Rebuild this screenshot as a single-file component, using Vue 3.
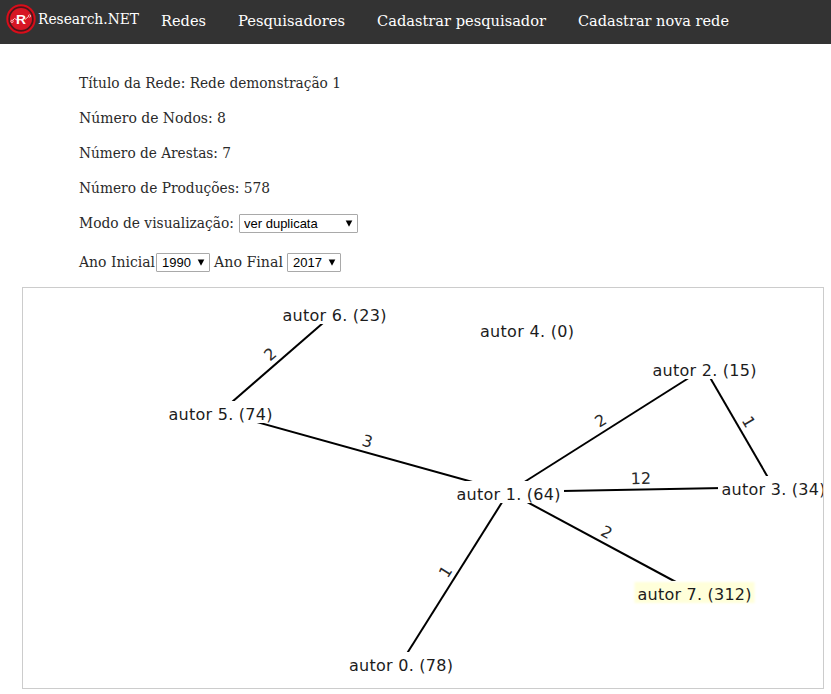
<script setup>
import { ref } from 'vue'

const links = [
  { label: 'Redes', width: 45 },
  { label: 'Pesquisadores', width: 107 },
  { label: 'Cadastrar pesquisador', width: 169 },
  { label: 'Cadastrar nova rede', width: 151 },
]

const facts = [
  { text: 'Título da Rede: Rede demonstração 1', width: 262 },
  { text: 'Número de Nodos: 8', width: 147 },
  { text: 'Número de Arestas: 7', width: 152 },
  { text: 'Número de Produções: 578', width: 191 },
]

const mode = ref('ver duplicata')
const firstYear = ref('1990')
const lastYear = ref('2017')

// Centre of each author box and the length of its label
const nodes = [
  { id: 0, count: 78, x: 401, y: 663, w: 104 },
  { id: 1, count: 64, x: 508.5, y: 492, w: 104 },
  { id: 2, count: 15, x: 704.5, y: 368, w: 104 },
  { id: 3, count: 34, x: 773.5, y: 487, w: 104 },
  { id: 4, count: 0, x: 527, y: 329, w: 94 },
  { id: 5, count: 74, x: 220.5, y: 412, w: 104 },
  { id: 6, count: 23, x: 334.5, y: 313, w: 104 },
  { id: 7, count: 312, x: 694.5, y: 592, w: 114, active: true },
]

const edges = [
  [5, 6, 2],
  [5, 1, 3],
  [1, 2, 2],
  [2, 3, 1],
  [1, 3, 12],
  [0, 1, 1],
  [1, 7, 2],
].map(([from, to, label]) => {
  const a = nodes[from]
  const b = nodes[to]
  const angle = (Math.atan2(b.y - a.y, b.x - a.x) * 180) / Math.PI
  return { a, b, label, place: `translate(${(a.x + b.x) / 2} ${(a.y + b.y) / 2}) rotate(${angle})` }
})
</script>

<template>
  <header class="bar">
    <div class="brand">
      <svg class="logo" width="30" height="30" viewBox="0 0 30 30">
        <circle cx="15" cy="15" r="13.7" fill="#4a171b" stroke="#d90d1a" stroke-width="2" />
        <circle cx="15" cy="15" r="11" fill="#d71624" />
        <path d="M6.500 16.500L8.500 14.500L11 16M19 15.500L22.500 12.500" fill="none" stroke="#ffc9cb" stroke-width="1" />
        <circle cx="6" cy="17.300" r="1.200" fill="#d71624" stroke="#ffd5d6" stroke-width=".8" />
        <circle cx="23.500" cy="12" r="1.200" fill="#d71624" stroke="#ffd5d6" stroke-width=".8" />
        <text x="10" y="19.500" textLength="10" lengthAdjust="spacingAndGlyphs" class="mark">R</text>
      </svg>
      <svg class="line" width="102" height="24"><text y="17" textLength="101" lengthAdjust="spacingAndGlyphs" class="serif name">Research.NET</text></svg>
    </div>
    <nav class="links">
      <svg v-for="l in links" :key="l.label" class="line" :width="l.width + 1" height="24">
        <text y="17" :textLength="l.width" lengthAdjust="spacingAndGlyphs" class="serif link">{{ l.label }}</text>
      </svg>
    </nav>
  </header>

  <main>
    <section class="info">
      <svg v-for="f in facts" :key="f.text" class="line fact" :width="f.width" height="24">
        <text y="16" :textLength="f.width" lengthAdjust="spacingAndGlyphs" class="serif">{{ f.text }}</text>
      </svg>
      <div class="row mode">
        <svg class="line" width="155" height="24"><text y="16" textLength="155" lengthAdjust="spacingAndGlyphs" class="serif">Modo de visualização:</text></svg>
        <label class="pick wide">
          <select v-model="mode"><option>ver duplicata</option></select>
          <svg width="8" height="7" viewBox="0 0 8 7"><path d="M.7.5h6.600L4 6.800z" /></svg>
        </label>
      </div>
      <div class="row years">
        <svg class="line" width="77" height="24"><text y="16" textLength="76" lengthAdjust="spacingAndGlyphs" class="serif">Ano Inicial</text></svg>
        <label class="pick year">
          <select v-model="firstYear"><option>1990</option></select>
          <svg width="8" height="7" viewBox="0 0 8 7"><path d="M.7.5h6.600L4 6.800z" /></svg>
        </label>
        <svg class="line final" width="69" height="24"><text y="16" textLength="69" lengthAdjust="spacingAndGlyphs" class="serif">Ano Final</text></svg>
        <label class="pick year">
          <select v-model="lastYear"><option>2017</option></select>
          <svg width="8" height="7" viewBox="0 0 8 7"><path d="M.7.5h6.600L4 6.800z" /></svg>
        </label>
      </div>
    </section>

    <svg class="graph" width="802" height="402" viewBox="22 287 802 402">
      <defs>
        <clipPath id="inside"><rect x="23" y="288" width="800" height="400" /></clipPath>
        <filter id="soft"><feGaussianBlur stdDeviation="1" /></filter>
      </defs>
      <g clip-path="url(#inside)">
        <line v-for="(e, i) in edges" :key="i" :x1="e.a.x" :y1="e.a.y" :x2="e.b.x" :y2="e.b.y" class="edge" />
        <text v-for="(e, i) in edges" :key="'t' + i" :transform="e.place" y="-5.500" class="weight">{{ e.label }}</text>
        <g v-for="n in nodes" :key="n.id">
          <rect :x="n.x - n.w / 2 - 3.500" :y="n.y - 11" :width="n.w + 7" height="22" fill="#fff" />
          <rect v-if="n.active" :x="n.x - n.w / 2 - 3" :y="n.y - 10" :width="n.w + 6" height="21" fill="#ffffda" filter="url(#soft)" />
          <text :x="n.x - n.w / 2" :y="n.y + 8" :textLength="n.w" class="author">autor {{ n.id }}. ({{ n.count }})</text>
        </g>
      </g>
      <rect x="22.500" y="287.500" width="801" height="401" fill="none" stroke="#ccc" />
    </svg>
  </main>
</template>

<style>
body { margin: 0; background: #fff; }
</style>

<style scoped>
.bar { display: flex; height: 44px; background: #333; }
.brand { display: flex; padding: 4px 0 0 6px; gap: 2px; }
.brand .line { margin-top: 3px; }
.logo, .line { display: block; flex: none; overflow: visible; }
.mark { font: bold 13px "Liberation Sans", sans-serif; fill: #fff; }
.serif { font-family: "DejaVu Serif Condensed", "DejaVu Serif", serif; font-stretch: condensed; font-size: 14.5px; fill: #2a2a2a; }
.serif.name { fill: #fff; }
.serif.link { fill: #fff; font-size: 15px; }
.links { display: flex; gap: 31px; padding: 9px 0 0 21px; }
.info { box-sizing: border-box; height: 243px; padding: 28px 0 0 79px; }
.fact { margin-bottom: 11px; }
.row { display: flex; height: 24px; }
.years { margin-top: 15px; }
.pick { display: grid; width: 54px; height: 19px; margin-top: 2px; align-items: center; }
.pick.wide { width: 119px; margin: 2px 0 0 5px; }
.pick select, .pick svg { grid-area: 1 / 1; }
.pick select {
  appearance: none; box-sizing: border-box; width: 100%; height: 19px; margin: 0; padding: 0 0 0 4px;
  border: 1px solid #a9a9a9; border-radius: 1px; background: #fff; color: #000;
  font: 13px/17px "Liberation Sans", Arial, sans-serif;
}
.pick.year select { padding-left: 5px; }
.pick svg { justify-self: end; margin-right: 5px; pointer-events: none; }
.final { margin: 0 4px; }
.graph { display: block; margin-left: 22px; }
.edge { stroke: #000; stroke-width: 2; }
.weight { font: 16px "DejaVu Sans", Verdana, sans-serif; text-anchor: middle; fill: #2a2a2a; }
.author { font: 16px "DejaVu Sans", Verdana, sans-serif; fill: #1c1c1c; }
</style>
